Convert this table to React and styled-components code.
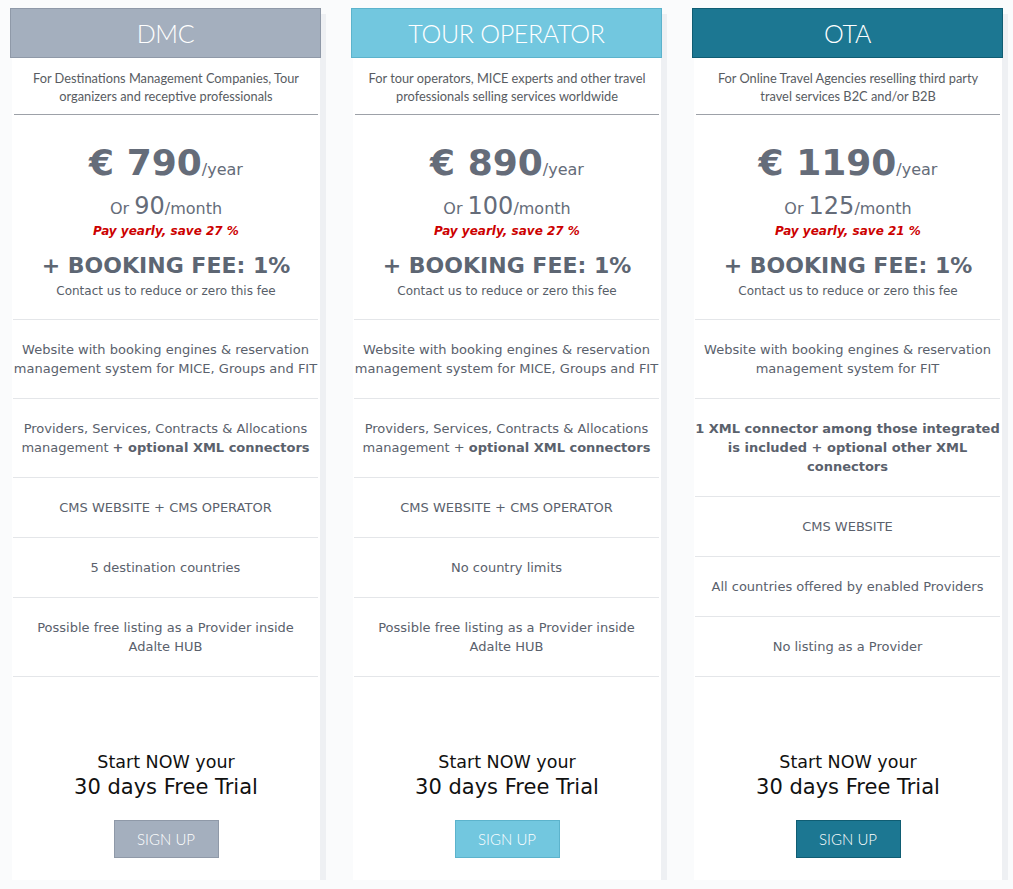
import React from 'react';
import styled, { createGlobalStyle } from 'styled-components';

// --- Plans data
const plans = [
  {
    id: 'dmc',
    name: 'DMC',
    bg: '#a4afbe',
    border: '#8f99a8',
    intro: 'For Destinations Management Companies, Tour organizers and receptive professionals',
    year: '790',
    month: '90',
    save: '27',
    features: [
      ['Website with booking engines & reservation management system for MICE, Groups and FIT'],
      ['Providers, Services, Contracts & Allocations management ', <b key="b">+ optional XML connectors</b>],
      ['CMS WEBSITE + CMS OPERATOR'],
      ['5 destination countries'],
      ['Possible free listing as a Provider inside Adalte\u00a0HUB']
    ]
  },
  {
    id: 'tour',
    name: 'TOUR OPERATOR',
    bg: '#72c7df',
    border: '#5cb3cc',
    intro: 'For tour operators, MICE experts and other travel professionals selling services worldwide',
    year: '890',
    month: '100',
    save: '27',
    features: [
      ['Website with booking engines & reservation management system for MICE, Groups and FIT'],
      ['Providers, Services, Contracts & Allocations management + ', <b key="b">optional XML connectors</b>],
      ['CMS WEBSITE + CMS OPERATOR'],
      ['No country limits'],
      ['Possible free listing as a Provider inside Adalte\u00a0HUB']
    ]
  },
  {
    id: 'ota',
    name: 'OTA',
    bg: '#1c7792',
    border: '#105d73',
    intro: 'For Online Travel Agencies reselling third party travel services B2C and/or B2B',
    year: '1190',
    month: '125',
    save: '21',
    features: [
      ['Website with booking engines & reservation management system for FIT'],
      [<b key="b">1 XML connector among those integrated is included + optional other XML connectors</b>],
      ['CMS WEBSITE'],
      ['All countries offered by enabled Providers'],
      ['No listing as a Provider']
    ]
  }
];

const GlobalStyle = createGlobalStyle`
  body {
    margin: 0;
    background: #fafbfc;
    font-family: "DejaVu Sans", Verdana, sans-serif;
  }
`;

const Page = styled.div`
  display: grid;
  grid-template-columns: repeat(3, 308px);
  column-gap: 33px;
  padding: 8px 0 0 12px;
`;

const Card = styled.section`
  display: flex;
  flex-direction: column;
  background: #fff;
  box-shadow: 6px 6px 0 #eef0f3;
  text-align: center;
`;

const Header = styled.h2`
  margin: 0 -1px 0 -2px;
  height: 50px;
  box-sizing: border-box;
  display: flex;
  align-items: center;
  justify-content: center;
  background: ${p => p.bg};
  border: 1px solid ${p => p.border};
  color: #fff;
  font-family: Lato, "Open Sans", sans-serif;
  font-weight: 300;
  font-size: 25px;
  letter-spacing: -0.3px;
`;

const Intro = styled.p`
  margin: 0 2px;
  padding: 11px 10px 9px;
  border-bottom: 1px solid #9da1a8;
  font-family: Lato, "Open Sans", sans-serif;
  font-size: 12.8px;
  line-height: 18px;
  color: #585c62;
`;

const Pricing = styled.div`
  display: flex;
  flex-direction: column;
  padding: 25px 0 19px;
  color: #656c79;
`;

const YearPrice = styled.div`
  line-height: 46px;
  font-size: 36px;
  font-weight: bold;

  small {
    font-size: 16px;
    font-weight: normal;
  }
`;

const MonthPrice = styled.div`
  margin-top: -1px;
  line-height: 28px;
  font-size: 16px;

  span {
    font-size: 24px;
  }
`;

const Save = styled.div`
  line-height: 16px;
  font-size: 12px;
  font-weight: bold;
  font-style: italic;
  color: #cc0000;
`;

const Fee = styled.div`
  margin-top: 14px;
  line-height: 26px;
  font-size: 22px;
  font-weight: bold;
  color: #5d6673;
`;

const FeeNote = styled.div`
  margin-top: 3px;
  line-height: 18px;
  font-size: 12px;
  color: #585e68;
`;

const Features = styled.ul`
  list-style: none;
  margin: 0 2px 0 1px;
  padding: 0;
  border-bottom: 1px solid #e4e6e9;
`;

const Feature = styled.li`
  padding: 20px 0;
  border-top: 1px solid #e4e6e9;
  font-size: 13px;
  line-height: 19px;
  color: #5a616c;
`;

const Trial = styled.div`
  display: flex;
  flex-direction: column;
  align-items: center;
  padding: 74px 0 22px;
  color: #111;
`;

const TrialLead = styled.div`
  line-height: 22px;
  font-size: 17.5px;
`;

const TrialTitle = styled.div`
  line-height: 28px;
  font-size: 21px;
`;

const SignUp = styled.button`
  margin-top: 19px;
  width: 105px;
  height: 38px;
  background: ${p => p.bg};
  border: 1px solid ${p => p.border};
  color: #fff;
  font-family: Lato, "Open Sans", sans-serif;
  font-weight: 300;
  font-size: 15px;
  cursor: pointer;
`;

const PlanCard = ({ plan }) => (
  <Card>
    <Header bg={plan.bg} border={plan.border}>{plan.name}</Header>
    <Intro>{plan.intro}</Intro>
    <Pricing>
      <YearPrice>
        € {plan.year}<small>/year</small>
      </YearPrice>
      <MonthPrice>
        Or <span>{plan.month}</span>/month
      </MonthPrice>
      <Save>Pay yearly, save {plan.save} %</Save>
      <Fee>+ BOOKING FEE: 1%</Fee>
      <FeeNote>Contact us to reduce or zero this fee</FeeNote>
    </Pricing>
    <Features>
      {plan.features.map((parts, i) => (
        <Feature key={i}>{parts}</Feature>
      ))}
    </Features>
    <Trial>
      <TrialLead>Start NOW your</TrialLead>
      <TrialTitle>30 days Free Trial</TrialTitle>
      <SignUp bg={plan.bg} border={plan.border}>SIGN UP</SignUp>
    </Trial>
  </Card>
);

const App = () => (
  <>
    <GlobalStyle />
    <Page>
      {plans.map(plan => <PlanCard key={plan.id} plan={plan} />)}
    </Page>
  </>
);

export default App;
